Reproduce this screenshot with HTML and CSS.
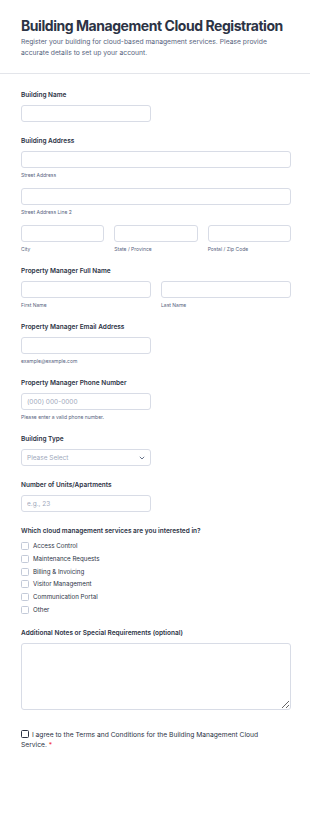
FILE: index.html
```html
<!DOCTYPE html>
<html lang="en">
<head>
    <meta charset="UTF-8">
    <meta name="viewport" content="width=device-width, initial-scale=1.0">
    <title>Building Management Cloud Registration</title>
    <link rel="stylesheet" href="styles.css">
</head>
<body>
    <!-- Header -->
    <header class="form-header">
        <h1>Building Management Cloud Registration</h1>
        <p>Register your building for cloud-based management services. Please provide accurate details to set up your account.</p>
    </header>

    <form class="form-body">
        <div class="field">
            <label class="field-label">Building Name</label>
            <input type="text" class="input half">
        </div>

        <div class="field">
            <label class="field-label">Building Address</label>
            <input type="text" class="input">
            <span class="sublabel">Street Address</span>
            <input type="text" class="input spaced">
            <span class="sublabel">Street Address Line 2</span>
            <div class="row three spaced">
                <div class="col">
                    <input type="text" class="input">
                    <span class="sublabel">City</span>
                </div>
                <div class="col">
                    <input type="text" class="input">
                    <span class="sublabel">State / Province</span>
                </div>
                <div class="col">
                    <input type="text" class="input">
                    <span class="sublabel">Postal / Zip Code</span>
                </div>
            </div>
        </div>

        <div class="field">
            <label class="field-label">Property Manager Full Name</label>
            <div class="row two">
                <div class="col">
                    <input type="text" class="input">
                    <span class="sublabel">First Name</span>
                </div>
                <div class="col">
                    <input type="text" class="input">
                    <span class="sublabel">Last Name</span>
                </div>
            </div>
        </div>

        <div class="field">
            <label class="field-label">Property Manager Email Address</label>
            <input type="email" class="input half">
            <span class="sublabel">example@example.com</span>
        </div>

        <div class="field">
            <label class="field-label">Property Manager Phone Number</label>
            <input type="tel" class="input half" placeholder="(000) 000-0000">
            <span class="sublabel">Please enter a valid phone number.</span>
        </div>

        <div class="field">
            <label class="field-label">Building Type</label>
            <div class="select half">
                <span>Please Select</span>
                <svg width="6" height="4" viewBox="0 0 6 4"><path d="M0.8 0.8 L3 3 L5.2 0.8" fill="none" stroke="#57647e" stroke-width="0.9"/></svg>
            </div>
        </div>

        <div class="field">
            <label class="field-label">Number of Units/Apartments</label>
            <input type="text" class="input half" placeholder="e.g., 23">
        </div>

        <div class="field">
            <label class="field-label">Which cloud management services are you interested in?</label>
            <div class="options">
                <label class="option"><span class="box"></span>Access Control</label>
                <label class="option"><span class="box"></span>Maintenance Requests</label>
                <label class="option"><span class="box"></span>Billing &amp; Invoicing</label>
                <label class="option"><span class="box"></span>Visitor Management</label>
                <label class="option"><span class="box"></span>Communication Portal</label>
                <label class="option"><span class="box"></span>Other</label>
            </div>
        </div>

        <div class="field">
            <label class="field-label">Additional Notes or Special Requirements (optional)</label>
            <textarea class="textarea"></textarea>
        </div>

        <div class="agree">
            <span class="box dark"></span> I agree to the Terms and Conditions for the Building Management Cloud Service. <span class="req">*</span>
        </div>
    </form>
</body>
</html>
```

FILE: styles.css
```css
* {
    box-sizing: border-box;
}

body {
    margin: 0;
    background: #ffffff;
    font-family: Inter, "Noto Sans", sans-serif;
    color: #2c3345;
}

.form-header {
    padding: 16px 19px 15px 21px;
    border-bottom: 1px solid #e3e5ea;
}

.form-header h1 {
    margin: 0;
    font-size: 14px;
    line-height: 20px;
    font-weight: 700;
    letter-spacing: -0.45px;
    color: #2c3345;
    white-space: nowrap;
}

.form-header p {
    margin: 0;
    font-size: 6.75px;
    line-height: 11px;
    color: #57647e;
    max-width: 255px;
}

.form-body {
    padding: 16px 19px 60px 21px;
}

.field {
    display: flex;
    flex-direction: column;
    margin-bottom: 14px;
}

.field-label {
    font-size: 6.5px;
    line-height: 10px;
    font-weight: 600;
    margin-bottom: 5px;
}

.input,
.select {
    height: 17px;
    border: 1px solid #d8dce6;
    border-radius: 3px;
    background: #ffffff;
    font-family: inherit;
    font-size: 6.5px;
    padding: 0 5px;
    width: 100%;
    outline: none;
}

.input::placeholder {
    color: #a0a8bb;
}

.half {
    width: 130px;
}

.spaced {
    margin-top: 10px;
}

.sublabel {
    font-size: 5px;
    line-height: 6px;
    color: #57647e;
    margin-top: 4px;
}

.row {
    display: grid;
    gap: 10px;
}

.row.three {
    grid-template-columns: repeat(3, 1fr);
}

.row.two {
    grid-template-columns: 1fr 1fr;
}

.col {
    display: flex;
    flex-direction: column;
}

.select {
    display: flex;
    align-items: center;
    justify-content: space-between;
    color: #a0a8bb;
}

.options {
    display: flex;
    flex-direction: column;
    gap: 4.8px;
    padding-top: 1px;
}

.option {
    display: flex;
    align-items: center;
    font-size: 6.2px;
    line-height: 8px;
    color: #2c3345;
}

.box {
    display: inline-block;
    width: 8px;
    height: 8px;
    border: 1px solid #c3cad8;
    border-radius: 1.5px;
    margin-right: 4px;
    flex-shrink: 0;
}

.textarea {
    height: 67px;
    border: 1px solid #d8dce6;
    border-radius: 3px;
    width: 100%;
    font-family: inherit;
    outline: none;
}

.agree {
    margin-top: 20px;
    font-size: 6.7px;
    line-height: 10px;
    color: #2c3345;
    max-width: 258px;
}

.box.dark {
    width: 8px;
    height: 8px;
    border-color: #2c3345;
    vertical-align: -1px;
    margin-right: 1px;
}

.req {
    color: #f23a3c;
}
```
